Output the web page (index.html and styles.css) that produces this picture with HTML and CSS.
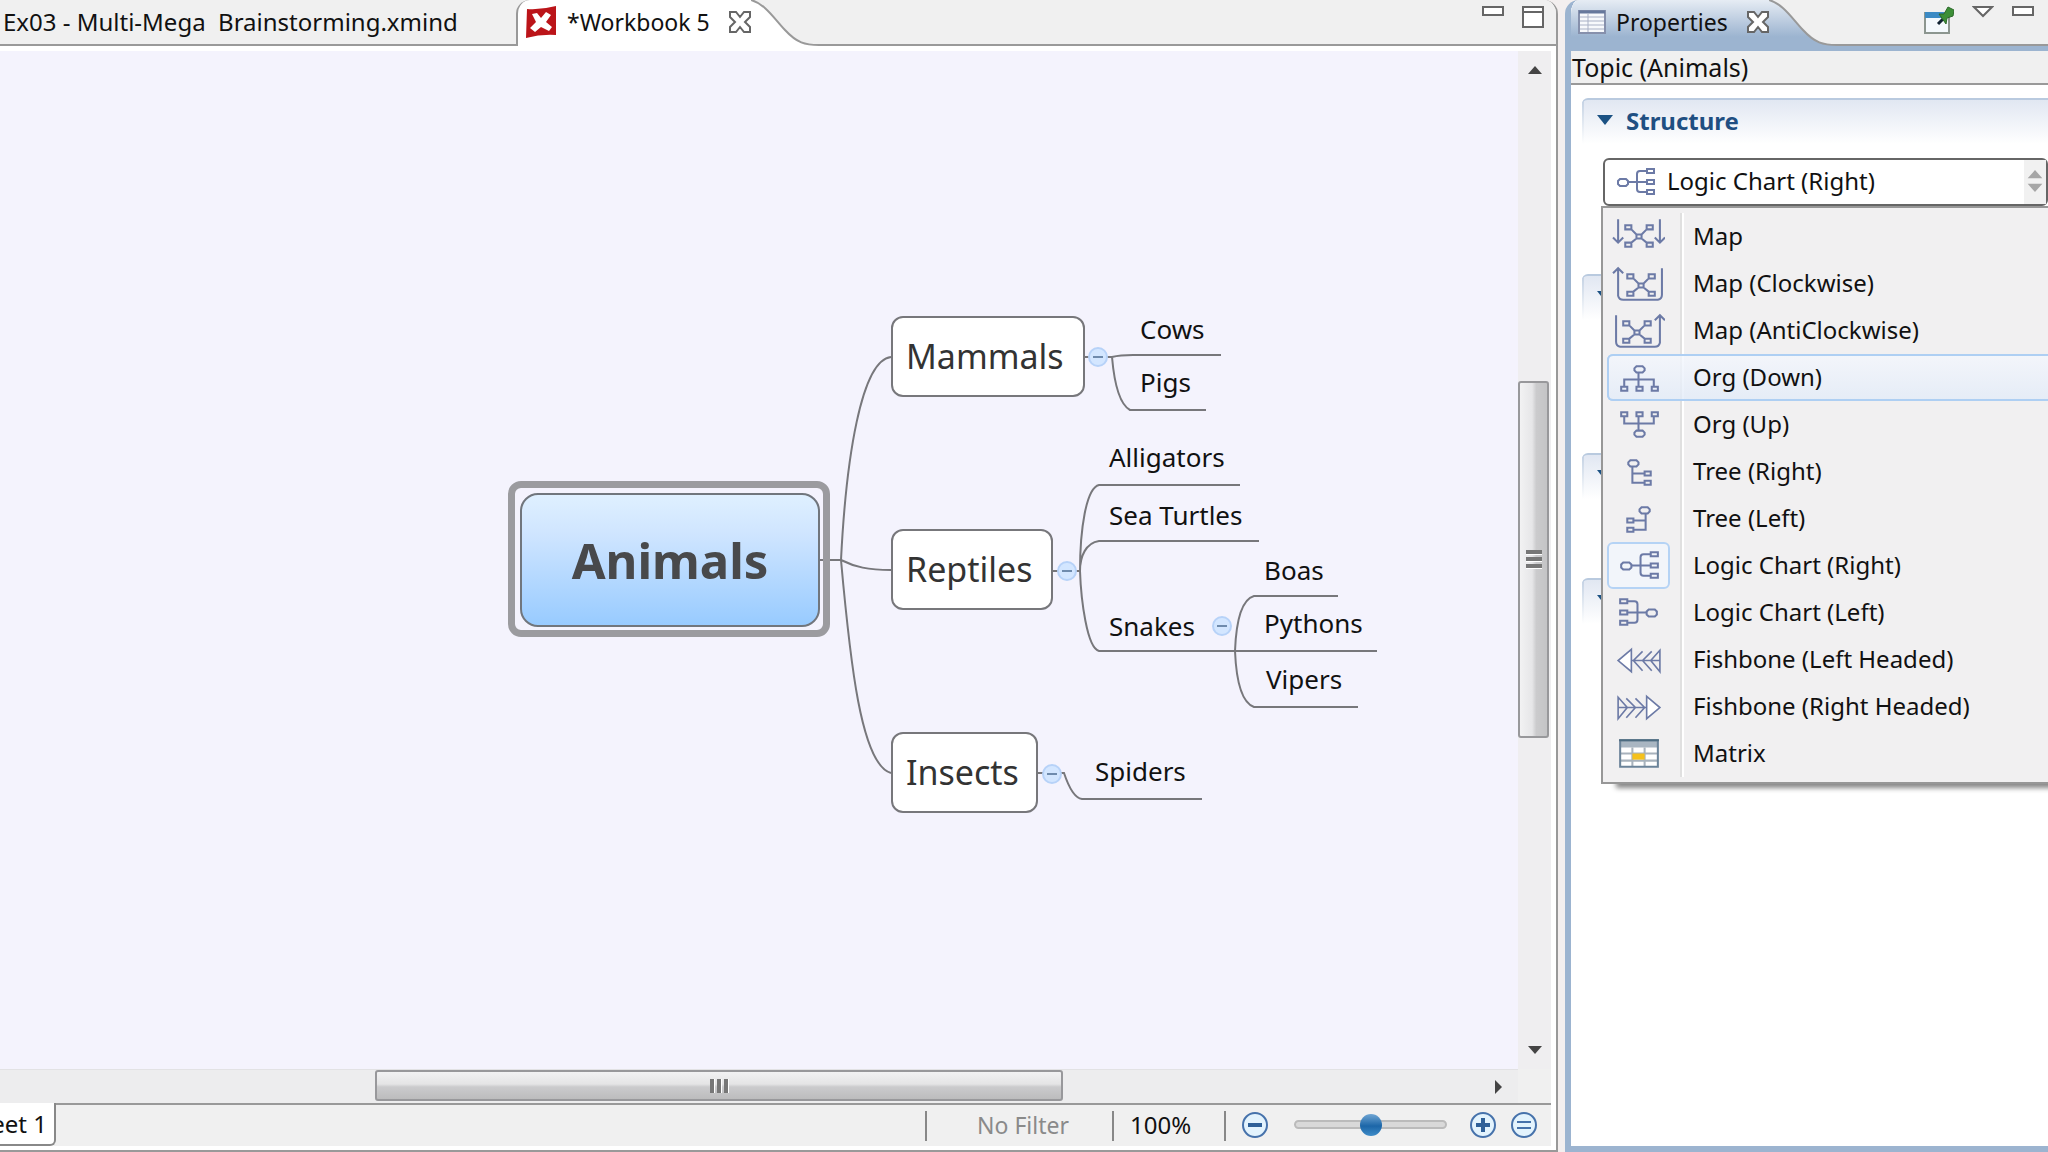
FILE: index.html
```
<!DOCTYPE html>
<html lang="en">
<head>
    <meta charset="UTF-8">
    <meta name="viewport" content="width=device-width, initial-scale=1.0">
    <title>Workbook 5</title>
    <link rel="stylesheet" href="styles.css">
</head>
<body>
    <!-- Shared icons -->
    <svg class="sprite" aria-hidden="true">
        <linearGradient id="tab-fill" x1="0" y1="0" x2="0" y2="1">
            <stop offset="0" stop-color="#e6ecf4"/>
            <stop offset="0.8" stop-color="#9cb4d0"/>
        </linearGradient>
        <symbol id="i-close" viewBox="0 0 22 22">
            <path d="M1 1h6l4 5 4-5h6v5l-5 5 5 5v5h-6l-4-5-4 5H1v-5l5-5-5-5z" fill="#fff" stroke="#666" stroke-width="2"/>
        </symbol>
        <symbol id="i-min" viewBox="0 0 22 10">
            <path d="M1 1h20v8H1z" fill="#fff" stroke="#666" stroke-width="2"/>
        </symbol>
        <symbol id="i-curve" viewBox="0 0 68 46">
            <path d="M0 0C14 4 22 17 34 30S54 45 68 45V46H0z"/>
            <path d="M0 0C14 4 22 17 34 30S54 45 68 45" fill="none" stroke="#999" stroke-width="2"/>
        </symbol>
        <symbol id="i-map" viewBox="0 0 52 36">
            <path d="M6 1v23M1 19l5 5 5-5M47 1v23M42 19l5 5 5-5"/>
            <path d="M13 7h6v4h-6zM34 7h6v4h-6zM13 24h6v4h-6zM34 24h6v4h-6zM24 16h5v4h-5zM19 11l5 5M34 11l-5 5M24 20l-5 4M29 20l5 4"/>
        </symbol>
        <symbol id="i-clockwise" viewBox="0 0 52 36">
            <path d="M1 8l5-5 5 5M6 4v26q1 4 5 4h34q4-1 4-5V3"/>
            <path d="M15 9h6v4h-6zM36 9h6v4h-6zM15 26h6v4h-6zM36 26h6v4h-6zM26 18h5v4h-5zM21 13l5 5M36 13l-5 5M26 22l-5 4M31 22l5 4"/>
        </symbol>
        <symbol id="i-anticlockwise" viewBox="0 0 52 36">
            <use href="#i-clockwise" width="52" height="36" transform="matrix(-1 0 0 1 53 0)"/>
        </symbol>
        <symbol id="i-org-down" viewBox="0 0 52 36">
            <path d="M24 7h6l2 2v2l-2 2h-6l-2-2V9zM26 13v14M12 27v-7h29v7M9 27h6v4H9zM24 27h6v4h-6zM39 27h6v4h-6z"/>
        </symbol>
        <symbol id="i-org-up" viewBox="0 0 52 36">
            <use href="#i-org-down" width="52" height="36" transform="matrix(1 0 0 -1 0 37)"/>
        </symbol>
        <symbol id="i-tree-right" viewBox="0 0 52 36">
            <path d="M18 7h6l2 2v2l-2 2h-6l-2-2V9zM20 13v16h12M20 20h12M32 18h6v4h-6zM32 27h6v4h-6z"/>
        </symbol>
        <symbol id="i-tree-left" viewBox="0 0 52 36">
            <use href="#i-tree-right" width="52" height="36" transform="matrix(-1 0 0 1 53 0)"/>
        </symbol>
        <symbol id="i-logic-right" viewBox="0 0 52 36">
            <path d="M11 15h6l2 2v3l-2 2h-6l-2-2v-3zM19 18h19M38 7h-7q-3 0-3 3v15q0 3 3 3h7M38 5h7v4h-7zM38 16h7v4h-7zM38 26h7v4h-7z"/>
        </symbol>
        <symbol id="i-logic-left" viewBox="0 0 52 36">
            <use href="#i-logic-right" width="52" height="36" transform="matrix(-1 0 0 1 53 0)"/>
        </symbol>
        <symbol id="i-fish-left" viewBox="0 0 52 36">
            <g stroke-width="1.6">
                <path d="M19 8L6 19l13 11z" fill="#fff"/>
                <path d="M19 19h28M30 10l-9 9 9 10M39 10l-9 9 9 10M47 9l-9 10 9 11z"/>
            </g>
        </symbol>
        <symbol id="i-fish-right" viewBox="0 0 52 36">
            <use href="#i-fish-left" width="52" height="36" transform="matrix(-1 0 0 1 53 0)"/>
        </symbol>
        <symbol id="i-matrix" viewBox="0 0 52 36">
            <path d="M8 5h37v26H8z" fill="#fff" stroke="none"/>
            <path d="M8 5h37v7H8z" fill="#a9b6c2" stroke="none"/>
            <path d="M20 12v19M32 12v19M8 18h37M8 25h37" stroke="#a8b2bc"/>
            <path d="M20 18h12v6H20z" fill="#f5c11c" stroke="none"/>
            <path d="M8 5h37v26H8z" stroke="#6b8399"/>
            <path d="M7 5h39" stroke="#4d6b80"/>
        </symbol>
    </svg>

    <main class="editor">
        <header class="tabs">
            <a href="#" class="tab tab-inactive">Ex03 - Multi-Mega&nbsp; Brainstorming.xmind</a>
            <div class="tab tab-active">
                <svg class="logo" viewBox="0 0 32 32" aria-hidden="true">
                    <path d="M2 3Q16 4 31 0V29Q16 28 1 32z" fill="#bb1419"/>
                    <path d="M7 8l5-1 4 5 5-6 5 3-5 7 6 5-3 4-8-4-6 5-5-4 6-6z" fill="#fff"/>
                </svg>
                <a href="#">*Workbook 5</a>
                <button class="icon-btn" aria-label="Close Workbook 5"><svg class="close"><use href="#i-close"/></svg></button>
            </div>
            <svg class="curve"><use href="#i-curve"/></svg>
            <div class="tools">
                <button class="icon-btn" aria-label="Minimize editor"><svg class="min"><use href="#i-min"/></svg></button>
                <button class="icon-btn" aria-label="Maximize editor">
                    <svg class="max" viewBox="0 0 22 22"><path d="M1 1h20v20H1zM1 6h20" fill="#fff" stroke="#666" stroke-width="2"/></svg>
                </button>
            </div>
        </header>

        <div class="workspace">
            <section class="canvas" aria-label="Mind map">
                <svg class="links" viewBox="0 51 1518 1018" aria-hidden="true">
                    <path d="M820 560h21M841 560C846 460 861 360 891 357M841 560C855 567 868 570 891 570M841 560C850 660 861 765 891 773"/>
                    <path d="M1084 357h28C1120 355 1125 355 1133 355H1221M1112 357C1114 380 1119 404 1130 410H1206"/>
                    <path d="M1052 571h28C1080 530 1086 488 1099 485H1240M1080 571C1080 556 1086 543 1099 541H1259M1080 571C1081 600 1087 648 1099 651H1377"/>
                    <path d="M1235 651C1236 625 1240 600 1254 596H1338M1235 651C1236 675 1240 702 1254 707H1358"/>
                    <path d="M1037 773h27C1068 785 1074 798 1082 799H1202"/>
                </svg>
                <div class="selection"><div class="central">Animals</div></div>
                <div class="topic mammals">Mammals</div>
                <div class="topic reptiles">Reptiles</div>
                <div class="topic insects">Insects</div>
                <div class="leaf cows">Cows</div>
                <div class="leaf pigs">Pigs</div>
                <div class="leaf alligators">Alligators</div>
                <div class="leaf turtles">Sea Turtles</div>
                <div class="leaf snakes">Snakes</div>
                <div class="leaf boas">Boas</div>
                <div class="leaf pythons">Pythons</div>
                <div class="leaf vipers">Vipers</div>
                <div class="leaf spiders">Spiders</div>
                <button class="fold fold-mammals" aria-label="Collapse Mammals"></button>
                <button class="fold fold-reptiles" aria-label="Collapse Reptiles"></button>
                <button class="fold fold-snakes" aria-label="Collapse Snakes"></button>
                <button class="fold fold-insects" aria-label="Collapse Insects"></button>
            </section>
            <div class="vscroll">
                <button class="icon-btn" aria-label="Scroll up"><svg class="arrow" viewBox="0 0 16 16"><path d="M1 12l7-8 7 8z"/></svg></button>
                <span></span>
                <div class="thumb"><i></i><i></i><i></i></div>
                <span></span>
                <button class="icon-btn" aria-label="Scroll down"><svg class="arrow" viewBox="0 0 16 16"><path d="M1 4l7 8 7-8z"/></svg></button>
            </div>
            <div class="hscroll">
                <span></span>
                <div class="thumb"><i></i><i></i><i></i></div>
                <span></span>
                <button class="icon-btn" aria-label="Scroll right"><svg class="arrow" viewBox="0 0 16 16"><path d="M4 1l7 7-7 7z"/></svg></button>
            </div>
            <div class="corner"></div>
        </div>

        <footer class="status">
            <a href="#" class="sheet">Sheet&nbsp;1</a>
            <span class="filter">No Filter</span>
            <span class="percent">100%</span>
            <div class="zoom">
                <button class="icon-btn" aria-label="Zoom out"><svg class="round" viewBox="0 0 28 28"><circle cx="14" cy="14" r="12"/><path d="M7 14h14"/></svg></button>
                <input type="range" min="0" max="100" value="50" aria-label="Zoom level">
                <button class="icon-btn" aria-label="Zoom in"><svg class="round" viewBox="0 0 28 28"><circle cx="14" cy="14" r="12"/><path d="M7 14h14M14 7v14"/></svg></button>
                <button class="icon-btn" aria-label="Fit map"><svg class="round thin" viewBox="0 0 28 28"><circle cx="14" cy="14" r="12"/><path d="M7 11h14M7 17h14"/></svg></button>
            </div>
        </footer>
    </main>

    <aside class="properties">
        <header class="tabs">
            <div class="tab tab-active">
                <svg class="table-icon" viewBox="0 0 28 24" aria-hidden="true">
                    <path d="M1 1h26v22H1z" fill="#f7f9fc" stroke="#8690ac" stroke-width="2"/>
                    <path d="M1 2h26" stroke="#66789c" stroke-width="3"/>
                    <path d="M2 7h24M2 11h24M2 15h24M2 19h24M10 4v18" stroke="#a9b1c6" stroke-width="1"/>
                </svg>
                <a href="#">Properties</a>
                <button class="icon-btn" aria-label="Close Properties"><svg class="close"><use href="#i-close"/></svg></button>
            </div>
            <svg class="curve"><use href="#i-curve"/></svg>
            <div class="tools">
                <button class="icon-btn" aria-label="Pin view">
                    <svg class="pin" viewBox="0 0 30 30">
                        <path d="M1 7h24v20H1z" fill="#f4f9fd" stroke="#8c9690" stroke-width="2"/>
                        <path d="M1 6h19v6H1z" fill="#3b8ac4"/>
                        <path d="M14 18l5-5" stroke="#123" stroke-width="3"/>
                        <path d="M15 8l5 0 4-7 6 3-1 6-6 2-1 6z" fill="#3d8f37" stroke="#2b6a2a"/>
                    </svg>
                </button>
                <button class="icon-btn" aria-label="View menu"><svg class="view-menu" viewBox="0 0 22 12"><path d="M2 1h18l-9 9z" fill="#fff" stroke="#666" stroke-width="2"/></svg></button>
                <button class="icon-btn" aria-label="Minimize properties"><svg class="min"><use href="#i-min"/></svg></button>
            </div>
        </header>
        <div class="subject">Topic (Animals)</div>
        <div class="sections">
            <section class="structure">
                <h2><button class="section-head"><svg viewBox="0 0 16 10"><path d="M0 0h16L8 10z"/></svg>Structure</button></h2>
                <div class="picker">
                    <label class="combo">
                        <svg class="shape" aria-hidden="true"><use href="#i-logic-right"/></svg>
                        <select aria-label="Structure">
                            <option>Logic Chart (Right)</option>
                        </select>
                        <svg class="spin" viewBox="0 0 24 44" aria-hidden="true"><path d="M4 18l8-9 8 9zM4 24l8 9 8-9z"/></svg>
                    </label>
                    <ul class="menu">
                        <li><button><svg class="shape"><use href="#i-map"/></svg><span>Map</span></button></li>
                        <li><button><svg class="shape"><use href="#i-clockwise"/></svg><span>Map (Clockwise)</span></button></li>
                        <li><button><svg class="shape"><use href="#i-anticlockwise"/></svg><span>Map (AntiClockwise)</span></button></li>
                        <li><button class="hot"><svg class="shape"><use href="#i-org-down"/></svg><span>Org (Down)</span></button></li>
                        <li><button><svg class="shape"><use href="#i-org-up"/></svg><span>Org (Up)</span></button></li>
                        <li><button><svg class="shape"><use href="#i-tree-right"/></svg><span>Tree (Right)</span></button></li>
                        <li><button><svg class="shape"><use href="#i-tree-left"/></svg><span>Tree (Left)</span></button></li>
                        <li><button class="checked"><svg class="shape"><use href="#i-logic-right"/></svg><span>Logic Chart (Right)</span></button></li>
                        <li><button><svg class="shape"><use href="#i-logic-left"/></svg><span>Logic Chart (Left)</span></button></li>
                        <li><button><svg class="shape"><use href="#i-fish-left"/></svg><span>Fishbone (Left Headed)</span></button></li>
                        <li><button><svg class="shape"><use href="#i-fish-right"/></svg><span>Fishbone (Right Headed)</span></button></li>
                        <li><button><svg class="shape"><use href="#i-matrix"/></svg><span>Matrix</span></button></li>
                    </ul>
                </div>
            </section>
            <section class="group-large"><button class="section-head" aria-label="Toggle section"><svg viewBox="0 0 16 10"><path d="M0 0h16L8 10z"/></svg></button></section>
            <section class="group-small"><button class="section-head" aria-label="Toggle section"><svg viewBox="0 0 16 10"><path d="M0 0h16L8 10z"/></svg></button></section>
            <section><button class="section-head" aria-label="Toggle section"><svg viewBox="0 0 16 10"><path d="M0 0h16L8 10z"/></svg></button></section>
        </div>
    </aside>
</body>
</html>
```
FILE: styles.css
```
* {
    box-sizing: border-box;
}

body {
    margin: 0;
    height: 100vh;
    display: grid;
    grid-template-columns: minmax(0, 1fr) 483px;
    column-gap: 7px;
    overflow: hidden;
    background-color: #f3efef;
    color: #111;
    font-family: "Noto Sans", sans-serif;
    font-size: 24px;
}

a {
    color: inherit;
    text-decoration: none;
}

button {
    font: inherit;
    color: inherit;
    cursor: pointer;
}

svg {
    display: block;
    flex: none;
}

h2 {
    margin: 0;
    font-size: 24px;
}

.sprite {
    position: absolute;
    width: 0;
    height: 0;
}

.icon-btn {
    display: flex;
    align-items: center;
    justify-content: center;
    padding: 0;
    border: none;
    background: none;
}

/* Tabs */
.tabs {
    display: flex;
    height: 46px;
    background-color: #f0f0f0;
}

.tab {
    display: flex;
    align-items: center;
    padding-bottom: 3px;
    white-space: nowrap;
}

.tab-inactive {
    width: 516px;
    padding-left: 3px;
    padding-bottom: 1px;
    border-bottom: 2px solid #999;
}

.tab-active {
    font-size: 23px;
    padding-left: 7px;
    border-left: 2px solid #999;
    border-top-left-radius: 14px;
    background-color: #fff;
}

.tab-active .icon-btn {
    margin-left: 19px;
}

.curve {
    width: 68px;
    height: 46px;
    fill: #fff;
}

.tools {
    flex: 1;
    display: flex;
    align-items: flex-start;
    justify-content: flex-end;
    gap: 18px;
    padding: 6px 12px 0 0;
    border-bottom: 2px solid #999;
}

.logo {
    width: 32px;
    height: 32px;
    margin-right: 10px;
}

.close,
.max {
    width: 22px;
    height: 22px;
}

.min {
    width: 22px;
    height: 10px;
}

/* Editor */
.editor {
    display: flex;
    flex-direction: column;
    min-width: 0;
    background-color: #fff;
    border-right: 2px solid #999;
    border-bottom: 2px solid #999;
    border-top-right-radius: 14px;
    overflow: hidden;
}

.workspace {
    flex: 1;
    min-height: 0;
    display: grid;
    grid-template-columns: minmax(0, 1fr) 33px;
    grid-template-rows: minmax(0, 1fr) 34px;
    margin: 5px 5px 0 0;
}

.canvas {
    position: relative;
    overflow: hidden;
    background-color: #f4f3fd;
}

.links {
    position: absolute;
    left: 0;
    top: 0;
    width: 1518px;
    height: 1018px;
    fill: none;
    stroke: #77777b;
    stroke-width: 2;
}

.selection,
.topic,
.leaf,
.fold {
    position: absolute;
}

.selection {
    left: 508px;
    top: 430px;
    padding: 5px 3px 3px 5px;
    border: 7px solid #9b9b9f;
    border-radius: 13px;
}

.central {
    width: 300px;
    height: 134px;
    border: 2px solid #71767d;
    border-radius: 18px;
    background-image: linear-gradient(#dff0ff, #cfe5ff 30%, #98cbff);
    color: #48494b;
    font-size: 49px;
    font-weight: bold;
    line-height: 130px;
    text-align: center;
}

.topic {
    left: 891px;
    height: 81px;
    padding: 0 13px;
    border: 2px solid #77777b;
    border-radius: 12px;
    background-color: #fff;
    color: #333;
    font-size: 34px;
    line-height: 76px;
}

.mammals { top: 265px; width: 194px; }
.reptiles { top: 478px; width: 162px; }
.insects { top: 681px; width: 147px; }

.leaf {
    font-size: 26px;
    line-height: 34px;
    white-space: nowrap;
}

.cows { left: 1140px; top: 261px; }
.pigs { left: 1140px; top: 314px; }
.alligators { left: 1109px; top: 389px; }
.turtles { left: 1109px; top: 447px; }
.snakes { left: 1109px; top: 558px; }
.boas { left: 1264px; top: 502px; }
.pythons { left: 1264px; top: 555px; }
.vipers { left: 1266px; top: 611px; }
.spiders { left: 1095px; top: 703px; }

.fold {
    width: 20px;
    height: 20px;
    padding: 0;
    border: 2px solid #b7d2f8;
    border-radius: 50%;
    background: linear-gradient(#6f8bad, #6f8bad) center / 10px 2px no-repeat #d3e6ff;
}

.fold-mammals { left: 1088px; top: 296px; }
.fold-reptiles { left: 1057px; top: 510px; }
.fold-snakes { left: 1212px; top: 565px; }
.fold-insects { left: 1042px; top: 713px; }

/* Scroll bars */
.vscroll {
    display: grid;
    grid-template-rows: 38px 291fr 357fr 292fr 38px;
    background-color: #efeef0;
}

.hscroll {
    display: grid;
    grid-template-columns: 375fr 688fr 417fr 38px;
    border-top: 1px solid #e2e2e4;
    background-color: #ededee;
}

.corner {
    background-color: #f0f0f0;
}

.thumb {
    display: flex;
    align-items: center;
    justify-content: center;
    gap: 2px;
    border: 2px solid #98989b;
    border-radius: 3px;
}

.vscroll .thumb {
    flex-direction: column;
    margin-right: 2px;
    background-image: linear-gradient(90deg, #f2f2f3, #e6e6e8 45%, #cbcbcd 60%, #c4c4c6);
}

.hscroll .thumb {
    margin-bottom: 2px;
    background-image: linear-gradient(#f2f2f3, #e4e4e5 45%, #cbcbcd 55%, #bcbcbd);
}

.vscroll i {
    width: 16px;
    height: 5px;
    background-color: #777;
    border-bottom: 1px solid #fff;
}

.hscroll i {
    width: 5px;
    height: 14px;
    background-color: #777;
    border-right: 1px solid #fff;
}

.arrow {
    width: 16px;
    height: 16px;
    fill: #444;
}

/* Status bar */
.status {
    display: flex;
    align-items: center;
    height: 43px;
    margin: 0 5px 4px 0;
    border-top: 2px solid #999;
    background-color: #f0f0f0;
}

.sheet {
    display: flex;
    justify-content: flex-end;
    align-items: center;
    width: 56px;
    height: 43px;
    margin: -2px auto 0 0;
    padding-right: 7px;
    overflow: hidden;
    border-right: 2px solid #888;
    border-bottom: 2px solid #888;
    border-bottom-right-radius: 6px;
    background-color: #fff;
}

.filter,
.percent,
.zoom {
    display: flex;
    align-items: center;
    height: 30px;
    padding-bottom: 2px;
    border-left: 2px solid #888;
}

.filter {
    width: 187px;
    padding-left: 50px;
    color: #8a8a8a;
    font-size: 23px;
}

.percent {
    width: 112px;
    padding-left: 16px;
}

.zoom {
    width: 327px;
    padding-left: 15px;
}

.zoom input {
    -webkit-appearance: none;
    appearance: none;
    width: 154px;
    height: 28px;
    margin: 0 22px 0 25px;
    background: none;
}

.zoom input::-webkit-slider-runnable-track {
    height: 9px;
    border: 2px solid #bbb;
    border-radius: 5px;
    background-color: #d9d9d9;
}

.zoom input::-webkit-slider-thumb {
    -webkit-appearance: none;
    width: 22px;
    height: 22px;
    margin-top: -8px;
    border-radius: 50%;
    background-image: linear-gradient(#6fa5d3, #1c66a8 55%, #3f8cc8);
}

.round {
    width: 28px;
    height: 28px;
    margin-right: 13px;
    fill: #e3f3fd;
    stroke: #2f6098;
    stroke-width: 4;
}

.zoom .icon-btn:first-child .round {
    margin-right: 0;
}

.round circle,
.thin {
    stroke: #4672ab;
    stroke-width: 2;
}

/* Properties view */
.properties {
    display: flex;
    flex-direction: column;
    border-left: 6px solid #9cb4d0;
    border-bottom: 6px solid #9cb4d0;
    border-top-left-radius: 14px;
    overflow: hidden;
    background-color: #fff;
}

.properties .tabs {
    flex: none;
    height: 51px;
    margin-left: -6px;
    border-bottom: 5px solid #9cb4d0;
}

.properties .tab-active {
    padding-left: 11px;
    background-image: linear-gradient(#e6ecf4, #9cb4d0 80%);
}

.properties .curve {
    fill: url(#tab-fill);
}

.properties .tools {
    gap: 18px;
    padding-right: 14px;
}

.table-icon {
    width: 28px;
    height: 24px;
    margin-right: 10px;
}

.pin {
    width: 30px;
    height: 30px;
}

.view-menu {
    width: 22px;
    height: 12px;
}

.subject {
    height: 34px;
    padding-left: 1px;
    border-bottom: 2px solid #999;
    background-color: #f0f0f0;
    font-size: 25px;
    line-height: 32px;
}

.sections {
    flex: 1;
    padding: 13px 0 0 11px;
}

.structure {
    height: 176px;
}

.group-large {
    height: 179px;
}

.group-small {
    height: 125px;
}

.section-head {
    display: flex;
    align-items: center;
    gap: 13px;
    width: 100%;
    height: 46px;
    padding: 0 0 4px 13px;
    border: 0 solid #c3d1e3;
    border-top: 2px solid #b9cadf;
    border-top-left-radius: 6px;
    background: linear-gradient(#c3d1e3, #fff) left / 2px 100% no-repeat, linear-gradient(#e1e7f2, #fff);
    color: #1f4f82;
    text-align: left;
}

.section-head svg {
    width: 16px;
    height: 10px;
    margin-left: 2px;
    fill: #1b5183;
}

.picker {
    position: relative;
    padding: 14px 0 0 21px;
}

.combo {
    display: flex;
    align-items: center;
    height: 48px;
    padding-left: 4px;
    border: 2px solid #666;
    border-radius: 6px;
    background-color: #fff;
}

.combo select {
    -webkit-appearance: none;
    appearance: none;
    flex: 1;
    min-width: 0;
    height: 44px;
    padding: 0 0 4px 6px;
    border: none;
    background: none;
    color: inherit;
    font: inherit;
}

.spin {
    width: 22px;
    height: 44px;
    fill: #a6a6a6;
    background-color: #f1f1f1;
}

.shape {
    width: 52px;
    height: 36px;
    fill: none;
    stroke: #6c7aa6;
    stroke-width: 2;
}

.menu {
    position: absolute;
    left: 19px;
    right: 0;
    top: 62px;
    margin: 0;
    padding: 5px 0 5px 4px;
    list-style: none;
    border: 2px solid #979797;
    border-right: none;
    background: linear-gradient(90deg, #e0e0e0 2px, #fff 2px) 77px 5px / 4px calc(100% - 10px) no-repeat #f1f0f1;
    box-shadow: 12px 7px 5px -3px #888;
}

.menu button {
    display: flex;
    align-items: center;
    width: 100%;
    height: 47px;
    padding: 0;
    border: none;
    background: none;
    text-align: left;
}

.menu .shape {
    width: 63px;
    height: 47px;
    padding: 5px;
}

.menu span {
    padding: 0 0 3px 23px;
}

.menu .hot {
    border-radius: 6px 0 0 6px;
    background-image: linear-gradient(rgba(244, 247, 253, 0.8), rgba(226, 235, 248, 0.8));
    box-shadow: inset 2px 0 #aecff3, inset 0 2px #aecff3, inset 0 -2px #aecff3;
}

.menu .checked .shape {
    border: 2px solid #b5d3f5;
    border-radius: 6px;
    background-color: #f2f5fa;
    padding: 3px;
}
```
